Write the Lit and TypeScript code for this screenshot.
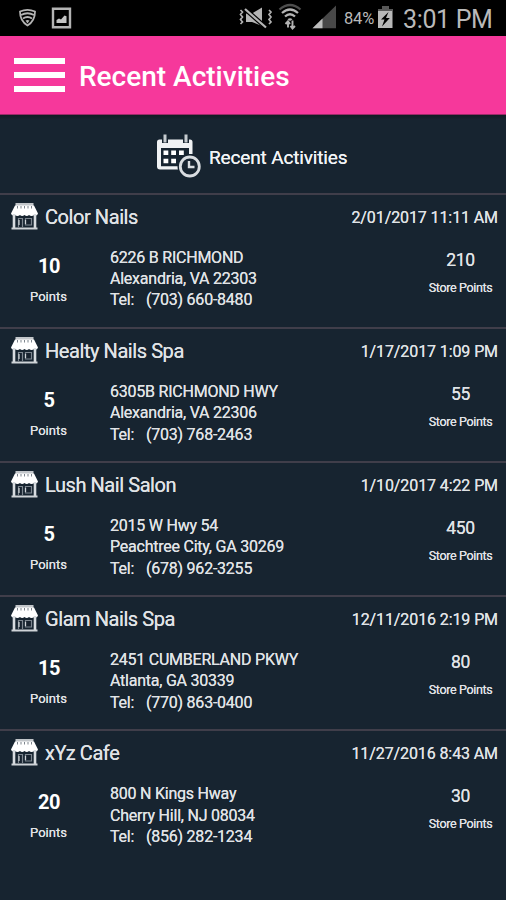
import { LitElement, html, css } from "lit";
import { customElement, property } from "lit/decorators.js";

interface Activity {
  store: string;
  date: string;
  earned: number;
  street: string;
  city: string;
  phone: string;
  total: number;
}

const activities: Activity[] = [
  { store: "Color Nails", date: "2/01/2017 11:11 AM", earned: 10, street: "6226 B RICHMOND", city: "Alexandria, VA 22303", phone: "(703) 660-8480", total: 210 },
  { store: "Healty Nails Spa", date: "1/17/2017 1:09 PM", earned: 5, street: "6305B RICHMOND HWY", city: "Alexandria, VA 22306", phone: "(703) 768-2463", total: 55 },
  { store: "Lush Nail Salon", date: "1/10/2017 4:22 PM", earned: 5, street: "2015 W Hwy 54", city: "Peachtree City, GA 30269", phone: "(678) 962-3255", total: 450 },
  { store: "Glam Nails Spa", date: "12/11/2016 2:19 PM", earned: 15, street: "2451 CUMBERLAND PKWY", city: "Atlanta, GA 30339", phone: "(770) 863-0400", total: 80 },
  { store: "xYz Cafe", date: "11/27/2016 8:43 AM", earned: 20, street: "800 N Kings Hway", city: "Cherry Hill, NJ 08034", phone: "(856) 282-1234", total: 30 },
];

@customElement("status-bar")
class StatusBar extends LitElement {
  static styles = css`
    :host { display: flex; height: 36px; background: #000; color: #b9b9b9; }
    svg { display: block; flex: none; }
    .left { flex: 1; display: flex; }
    .right { display: flex; }
    .battery { width: 33px; margin-left: 6px; font-size: 16.5px; line-height: 38px; letter-spacing: -0.2px; white-space: nowrap; }
    .clock { width: 90px; margin: 0 13px 0 9px; font-size: 25px; line-height: 40px; letter-spacing: -0.35px; white-space: nowrap; }
  `;
  render() {
    return html`
      <div class="left">
        <svg width="48" height="36" viewBox="0 0 48 36" fill="none" stroke="#b4b4b4" stroke-width="1.8">
          <path d="M20 11.5Q27.5 8.3 35 11.5Q35 21 27.5 25.5Q20 21 20 11.5Z" />
          <path d="M21 15Q27.5 11.5 34 15M23 18.5Q27.5 15.5 32 18.5" />
          <path d="M25.5 20.5Q27.5 19.4 29.5 20.5L27.5 23.5Z" fill="#b4b4b4" stroke="none" />
        </svg>
        <svg width="26" height="36" viewBox="0 0 26 36">
          <path d="M5 8.8H22V27.2H5Z" fill="none" stroke="#b4b4b4" stroke-width="2.4" />
          <path d="M8.5 23V20L11 18.5L13 19.5L16.5 15.5L18.5 16.2V23Z" fill="#c4c4c4" />
        </svg>
      </div>
      <div class="right">
        <svg width="36" height="36" viewBox="0 0 36 36">
          <path d="M8 13.5H14L24 7.5V26L14 22H8Z" fill="#b4b4b4" />
          <path d="M7 9L28 27.5" stroke="#000" stroke-width="4.5" />
          <path d="M7 9L28 27.5" stroke="#b4b4b4" stroke-width="2.2" />
          <path d="M2.5 10L4.5 12L2.5 14.5L4.5 17L2.5 19.5L4.5 22L2.5 24M31 10L33 12L31 14.5L33 17L31 19.5L33 22L31 24" fill="none" stroke="#b0b0b0" stroke-width="1.7" />
        </svg>
        <svg width="34" height="36" viewBox="0 0 34 36" fill="none" stroke="#b4b4b4" stroke-width="2.3">
          <path d="M5.5 9.5Q16 0.5 26.5 9.5" stroke="#4d4d4d" />
          <path d="M8 13Q16 6 24 13M11 16.5Q16 12 21 16.5" />
          <path d="M13.5 19.3Q16 17.4 18.5 19.3L16 21Z" fill="#b4b4b4" stroke="none" />
          <path d="M14 27.5V21M11.5 24L14 21.3L16 24M18.5 20.5V29M16.5 26L18.5 28.5L21 26" stroke-width="1.9" />
        </svg>
        <svg width="30" height="36" viewBox="0 0 30 36">
          <path d="M4.5 28.2L28 5.5V28.2Z" fill="#484848" />
          <path d="M4.5 28.2L14.5 18.5V28.2Z" fill="#bdbdbd" />
        </svg>
        <div class="battery">84%</div>
        <svg width="17" height="36" viewBox="0 0 17 36">
          <path d="M5 6H11.5V9H15.5V28H1V9H5Z" fill="#b8b8b8" />
          <path d="M5 6H11.5V9H15.5V11H1V9H5Z" fill="#585858" />
          <path d="M11.5 12L4 19.5H7.5L5 26.5L12.8 18H9Z" fill="#000" />
        </svg>
        <div class="clock">3:01 PM</div>
      </div>
    `;
  }
}

@customElement("activity-row")
class ActivityRow extends LitElement {
  @property({ attribute: false }) item!: Activity;

  static styles = css`
    :host { display: block; box-sizing: border-box; height: 134.1px; border-top: 2px solid #403e4a; white-space: nowrap; color: #e0e3e6; }
    .head { display: flex; height: 44px; padding: 0 8px 0 11px; align-items: center; }
    .shop { flex: none; display: block; margin: -3px 7px 0 0; }
    .store { flex: 1; font-size: 20px; letter-spacing: -0.43px; text-shadow: 0 0 0.5px #e0e3e6; }
    .date { font-size: 16px; letter-spacing: -0.1px; text-shadow: 0 0 0.5px #e0e3e6; }
    .body { display: flex; }
    .earned { width: 97px; padding-top: 14px; text-align: center; }
    .num { font-size: 20px; line-height: 26px; font-weight: 700; letter-spacing: -0.4px; color: #fff; padding-left: 1px; }
    .label { font-size: 13px; line-height: 16px; margin-top: 10px; text-shadow: 0 0 0.5px #e0e3e6; }
    .address { flex: 1; padding: 8px 0 0 13px; font-size: 16px; line-height: 21.2px; letter-spacing: -0.23px; text-shadow: 0 0 0.5px #e0e3e6; }
    .tel { display: flex; }
    .key { width: 36px; }
    .total { width: 91px; padding-top: 9px; text-align: center; }
    .sum { font-size: 17.5px; line-height: 24px; letter-spacing: -0.3px; text-shadow: 0 0 0.5px #e0e3e6; }
    .total .label { margin-top: 8px; font-size: 12.5px; letter-spacing: -0.35px; }
  `;
  render() {
    const a = this.item;
    return html`
      <div class="head">
        <svg class="shop" width="27" height="28" viewBox="0 0 27 28">
          <path d="M4.5 1H22.5V5H4.5Z" fill="#c2c6ca" />
          <path d="M4 3.5H23L27 11.5Q26 14.5 23.3 13Q20.5 15 18 13Q15.8 15 13.5 13Q11 15 9 13Q6.5 15 3.7 13Q1 14.5 0 11.5Z" fill="#fff" />
          <path d="M6.5 4V6.5M10 4V6.5M13.5 4V6.5M17 4V6.5M20.5 4V6.5" stroke="#7d858d" stroke-width="1" />
          <path d="M3 12V26M24 12V26" stroke="#d8dce0" stroke-width="2.6" />
          <path d="M0.5 26.5H26.5" stroke="#cfd3d7" stroke-width="2" />
          <path d="M7.5 25V16.5H11.5V25M14.5 16.5H20.5V23H14.5Z" fill="#17222e" stroke="#7d868f" stroke-width="1.2" />
          <path d="M8 18V23M14.5 18V22" stroke="#d0d4d8" stroke-width="1.2" />
        </svg>
        <div class="store">${a.store}</div>
        <div class="date">${a.date}</div>
      </div>
      <div class="body">
        <div class="earned">
          <div class="num">${a.earned}</div>
          <div class="label">Points</div>
        </div>
        <div class="address">
          <div>${a.street}</div>
          <div>${a.city}</div>
          <div class="tel"><span class="key">Tel:</span><span>${a.phone}</span></div>
        </div>
        <div class="total">
          <div class="sum">${a.total}</div>
          <div class="label">Store Points</div>
        </div>
      </div>
    `;
  }
}

@customElement("app-root")
class AppRoot extends LitElement {
  static styles = css`
    :host { display: block; width: 506px; height: 900px; overflow: hidden; background: #172430; font-family: Roboto, "Liberation Sans", sans-serif; }
    .bar { display: flex; align-items: center; box-sizing: border-box; height: 79px; padding: 0 14px; background: #f6389b; border-bottom: 1px solid #9b2b68; color: #fff; }
    .menu { display: flex; flex-direction: column; gap: 8px; width: 51px; margin-right: 14px; }
    .line { height: 6px; background: #fff; }
    .title { font-size: 28px; line-height: 34px; font-weight: 500; white-space: nowrap; padding-top: 3px; }
    .banner { display: flex; align-items: center; height: 78px; padding-left: 156px; color: #f2f4f6; background: linear-gradient(#111a22, #172430 5px); }
    .calendar { flex: none; display: block; margin: 4px 8px 0 0; }
    .caption { font-size: 19px; letter-spacing: -0.15px; white-space: nowrap; padding-top: 7px; text-shadow: 0 0 0.5px #f2f4f6; }
  `;
  render() {
    return html`
      <status-bar></status-bar>
      <div class="bar">
        <div class="menu"><div class="line"></div><div class="line"></div><div class="line"></div></div>
        <div class="title">Recent Activities</div>
      </div>
      <div class="banner">
        <svg class="calendar" width="45" height="44" viewBox="0 0 45 44">
          <path d="M3.5 5.5Q1 5.5 1 8V32.5Q1 35.5 4 35.5H24V32.3H5V14H33V20H36.5V8Q36.5 5.5 34 5.5Z" fill="#f0f2f4" />
          <path d="M9 0V9M30 0V9" stroke="#172430" stroke-width="6" />
          <path d="M9 0.5V8.5M30 0.5V8.5" stroke="#c6cbd0" stroke-width="3" />
          <path d="M7.5 16.5H12.3V21H7.5ZM15.2 16.5H20V21H15.2ZM23 16.5H27.8V21H23ZM7.5 24.8H12.3V29.3H7.5ZM15.2 24.8H20V29.3H15.2Z" fill="#fff" />
          <circle cx="33.8" cy="32.5" r="12.3" fill="#172430" />
          <circle cx="33.8" cy="32.5" r="9.5" fill="none" stroke="#d9dde1" stroke-width="2.8" />
          <path d="M33 27V33H38.5" fill="none" stroke="#d9dde1" stroke-width="2.4" />
        </svg>
        <div class="caption">Recent Activities</div>
      </div>
      ${activities.map((a) => html`<activity-row .item=${a}></activity-row>`)}
    `;
  }
}
